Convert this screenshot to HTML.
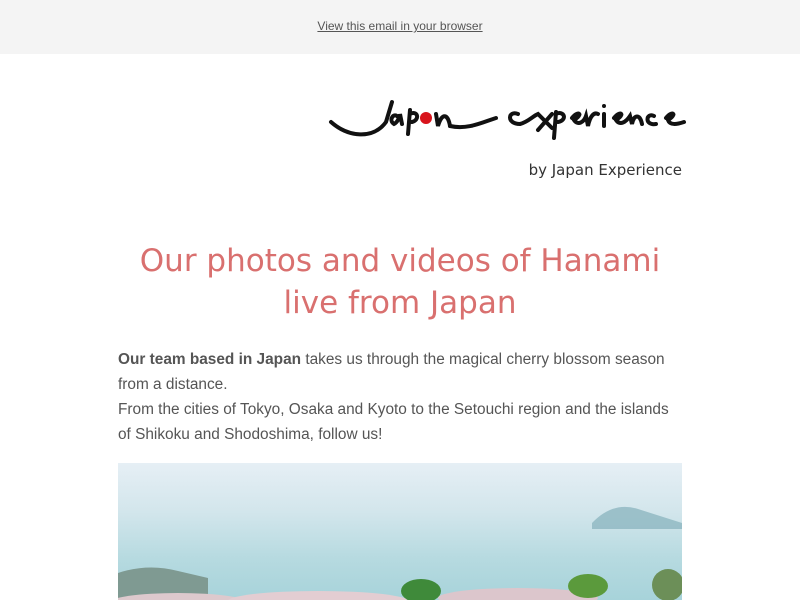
<!DOCTYPE html>
<html><head><meta charset="utf-8"><style>
body{margin:0;background:#fff;font-family:"Liberation Sans",sans-serif;}
.top{height:54px;background:#f4f4f4;text-align:center;}
.top a{display:inline-block;margin-top:19px;font-size:12px;color:#555;text-decoration:underline;}
.by{position:absolute;left:0;width:682px;top:161px;text-align:right;color:#333;font-family:"DejaVu Sans","Liberation Sans",sans-serif;font-size:15px;}
h1{position:absolute;top:240px;left:0;width:800px;margin:0;text-align:center;font-weight:normal;line-height:42px;color:#d9706f;font-family:"DejaVu Sans","Liberation Sans",sans-serif;font-size:31px;}
.txt{position:absolute;top:347px;left:118px;width:600px;white-space:nowrap;font-size:15.4px;line-height:25px;color:#555;font-family:"Liberation Sans",sans-serif;}
.img{position:absolute;left:118px;top:463px;width:564px;height:137px;overflow:hidden;background:linear-gradient(#e6eff5 0%,#d3e6ec 35%,#b6dae0 70%,#a7d3da 100%);}
</style></head><body>
<div class="top"><a>View this email in your browser</a></div>
<svg style="position:absolute;left:328px;top:92px" width="360" height="52" viewBox="0 0 360 52">
<g fill="none" stroke="#111" stroke-width="4" stroke-linecap="round">
<path d="M3 30 C20 45 45 48 58 30 L64 10"/>
<path d="M70 25 C66 20 60 28 66 32 C70 30 72 24 72 22 L74 32"/>
<path d="M82 18 L80 42 M82 22 C90 18 92 28 84 30"/>
<path d="M108 22 L110 34 C114 20 120 22 122 34"/>
<path d="M122 34 C140 38 155 30 168 26"/>
<path d="M190 22 C180 18 178 32 192 32 C200 30 205 24 210 22 L224 36 M224 22 L210 38"/>
<path d="M228 20 L226 46 M228 22 C236 18 240 28 230 30"/>
<path d="M244 26 C250 18 256 22 246 28 C250 34 256 30 258 24 L260 34 C262 24 266 20 270 22"/>
<path d="M276 22 L276 34 M286 26 C292 18 298 22 288 28 C292 34 298 30 302 24 L304 32 C306 22 312 22 314 32"/>
<path d="M326 24 C318 20 316 34 328 32 M338 26 C344 18 350 22 340 28 C342 34 350 32 356 30"/>
</g>
<circle cx="98" cy="26" r="6" fill="#d8141c"/>
<circle cx="276" cy="14" r="2" fill="#111"/>
</svg>
<div class="by">by Japan Experience</div>
<h1>Our photos and videos of Hanami<br>live from Japan</h1>
<div class="txt"><b>Our team based in Japan</b> takes us through the magical cherry blossom season<br>from a distance.<br>From the cities of Tokyo, Osaka and Kyoto to the Setouchi region and the islands<br>of Shikoku and Shodoshima, follow us!</div>
<div class="img"><svg width="564" height="137">
<path d="M474 60 Q495 38 520 46 L564 60 L564 66 L474 66 Z" fill="#8db6c0" opacity=".8"/>
<path d="M0 110 Q30 100 60 108 L90 115 L90 137 L0 137 Z" fill="#7f9a92"/>
<ellipse cx="60" cy="140" rx="70" ry="10" fill="#ddc9cd"/>
<ellipse cx="200" cy="138" rx="90" ry="10" fill="#e3cdd2"/>
<ellipse cx="303" cy="128" rx="20" ry="12" fill="#3f8a3a"/>
<ellipse cx="400" cy="135" rx="80" ry="10" fill="#dcc6cc"/>
<ellipse cx="470" cy="123" rx="20" ry="12" fill="#5b9a3c"/>
<ellipse cx="550" cy="122" rx="16" ry="16" fill="#6c8f58"/>
</svg></div>
</body></html>
